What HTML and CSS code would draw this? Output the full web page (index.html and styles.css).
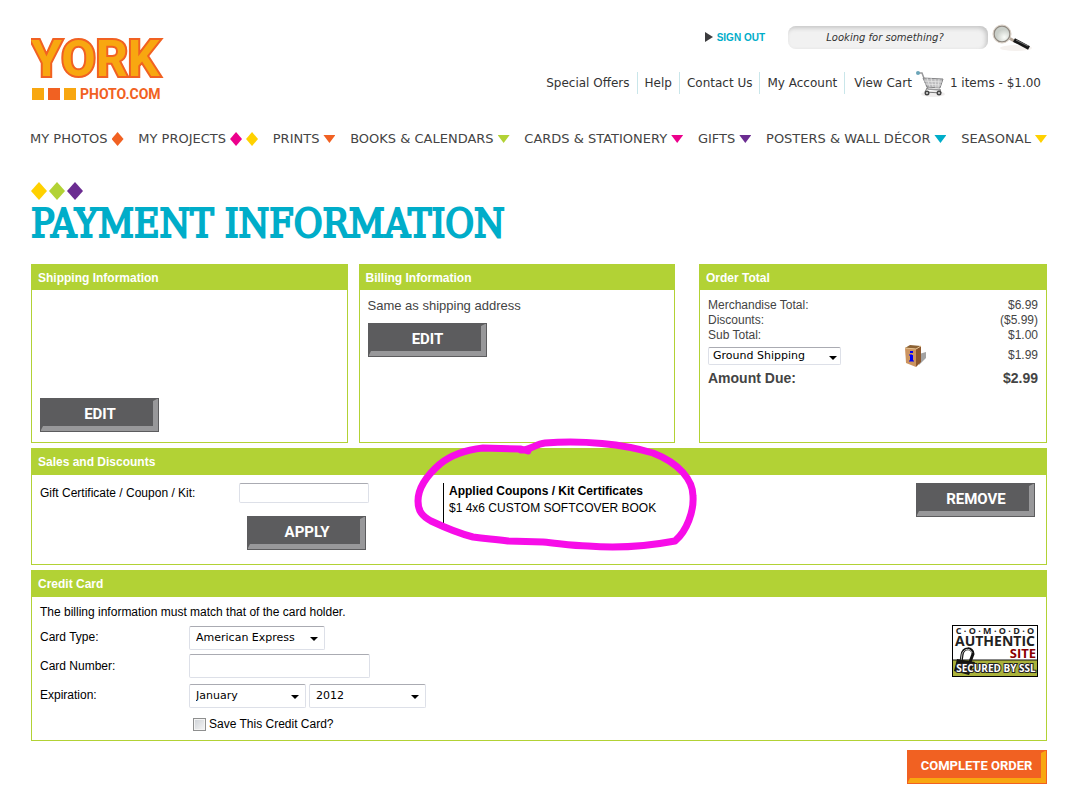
FILE: index.html
```html
<!doctype html>
<html lang="en">
  <head>
    <meta charset="UTF-8" />
    <meta name="viewport" content="width=device-width, initial-scale=1.0" />
    <title>York Photo - Payment Information</title>
    <link rel="stylesheet" href="styles.css">
  </head>
  <body>
    <div class="page">
      <!-- Header -->
      <header class="header">
        <a class="logo" href="#" aria-label="York Photo">
          <svg width="136" height="100" viewBox="0 0 136 100">
            <text class="logo-york" x="0" y="70">YORK</text>
            <rect x="1" y="82" width="12" height="12" fill="#f8a710"/>
            <rect x="17" y="82" width="12" height="12" fill="#f16122"/>
            <rect x="33" y="82" width="12" height="12" fill="#f8a710"/>
            <text class="logo-photo" x="49" y="93">PHOTO.COM</text>
          </svg>
        </a>

        <div class="header-right">
          <div class="header-top">
            <a class="sign-out" href="#">
              <svg width="8" height="10" viewBox="0 0 8 10"><path d="M0 0L8 5L0 10Z" fill="#3c3c3e"/></svg>
              SIGN OUT
            </a>
            <form class="search">
              <input class="search-input" type="text" placeholder="Looking for something?" aria-label="Search">
              <button class="search-button" type="button" aria-label="Search">
                <svg width="42" height="30" viewBox="0 0 42 30">
                  <defs>
                    <radialGradient id="lens" cx=".65" cy=".7">
                      <stop offset="0" stop-color="#fbfdf9"/>
                      <stop offset="1" stop-color="#c9cec8"/>
                    </radialGradient>
                  </defs>
                  <ellipse cx="24" cy="26" rx="16" ry="3" fill="#f5f1ee"/>
                  <path d="M17 16L24 20" stroke="#b5a79a" stroke-width="3"/>
                  <path d="M22 18L37 26" stroke="#161616" stroke-width="4"/>
                  <path d="M24 18L36 24" stroke="#777" stroke-width="1"/>
                  <circle cx="10" cy="12" r="8" fill="url(#lens)" stroke="#8f8981" stroke-width="1.5"/>
                  <circle cx="10" cy="12" r="9" fill="none" stroke="#d9cfc4" stroke-width="1"/>
                </svg>
              </button>
            </form>
          </div>
          <ul class="links">
            <li><a href="#">Special Offers</a></li>
            <li><a href="#">Help</a></li>
            <li><a href="#">Contact Us</a></li>
            <li><a href="#">My Account</a></li>
            <li class="cart">
              <a href="#">View Cart</a>
              <svg width="30" height="28" viewBox="0 0 30 28">
                <ellipse cx="17" cy="25" rx="12" ry="3" fill="#eeecec"/>
                <path d="M2 4L6 4L12 20L24 21" fill="none" stroke="#99999b" stroke-width="1.5"/>
                <circle cx="2" cy="4" r="2" fill="#6ba5b8"/>
                <path d="M7 9L27 10L24 19L11 18Z" fill="#bdbdbf" stroke="#858587"/>
                <path d="M11 9L14 18M15 9L17 18M19 10L20 19M23 10L22 19M8 12L26 13M9 15L25 16" stroke="#e9e9ea" stroke-width=".7"/>
                <path d="M11 19L9 23L25 24L24 20" fill="none" stroke="#777"/>
                <circle cx="11" cy="24" r="2.5" fill="#444"/><circle cx="11" cy="24" r="1" fill="#ddd"/>
                <circle cx="23" cy="24" r="2.5" fill="#444"/><circle cx="23" cy="24" r="1" fill="#ddd"/>
              </svg>
              <span>1 items - $1.00</span>
            </li>
          </ul>
        </div>
      </header>

      <!-- Main nav -->
      <nav class="nav">
        <a href="#">MY PHOTOS <i class="diamond orange"></i></a>
        <a href="#">MY PROJECTS <i class="diamond pink"></i><i class="diamond yellow"></i></a>
        <a href="#">PRINTS <i class="arrow orange"></i></a>
        <a href="#">BOOKS &amp; CALENDARS <i class="arrow green"></i></a>
        <a href="#">CARDS &amp; STATIONERY <i class="arrow pink"></i></a>
        <a href="#">GIFTS <i class="arrow purple"></i></a>
        <a href="#">POSTERS &amp; WALL DÉCOR <i class="arrow teal"></i></a>
        <a href="#">SEASONAL <i class="arrow yellow"></i></a>
      </nav>

      <main>
        <div class="diamonds">
          <i class="diamond yellow"></i><i class="diamond green"></i><i class="diamond purple"></i>
        </div>
        <h1>PAYMENT INFORMATION</h1>

        <div class="summary">
          <section class="card shipping">
            <h2>Shipping Information</h2>
            <div class="card-body">
              <button class="btn" type="button">EDIT</button>
            </div>
          </section>

          <section class="card billing">
            <h2>Billing Information</h2>
            <div class="card-body">
              <p>Same as shipping address</p>
              <button class="btn" type="button">EDIT</button>
            </div>
          </section>

          <section class="card order">
            <h2>Order Total</h2>
            <div class="card-body">
              <table>
                <tr><td colspan="2">Merchandise Total:</td><td class="price">$6.99</td></tr>
                <tr><td colspan="2">Discounts:</td><td class="price">($5.99)</td></tr>
                <tr><td colspan="2">Sub Total:</td><td class="price">$1.00</td></tr>
                <tr class="ship-row">
                  <td class="ship-cell">
                    <span class="select ship-select">
                      <select aria-label="Shipping method"><option>Ground Shipping</option></select>
                    </span>
                  </td>
                  <td class="box-cell">
                    <svg width="24" height="24" viewBox="0 0 24 24">
                      <path d="M15 10L22 8L22 14L15 21Z" fill="#a3a3a3"/>
                      <path d="M1 4L6 1L17 2L12 5Z" fill="#8c6234"/>
                      <path d="M1 4L12 5L12 23L2 19Z" fill="#cc9460"/>
                      <path d="M12 5L17 2L17 18L12 23Z" fill="#8d572d"/>
                      <path d="M1 4L12 5L17 2" fill="none" stroke="#e4c08e"/>
                      <path d="M6 7h3v2H6zM6 11h3v6H6z" fill="#0000f5"/>
                      <path d="M5 11h3M5 17h5" stroke="#0000f5" stroke-width="1"/>
                    </svg>
                  </td>
                  <td class="price">$1.99</td>
                </tr>
                <tr class="due"><td colspan="2">Amount Due:</td><td class="price">$2.99</td></tr>
              </table>
            </div>
          </section>
        </div>

        <section class="card sales">
          <h2>Sales and Discounts</h2>
          <div class="card-body">
            <form class="coupon-form">
              <label for="coupon">Gift Certificate / Coupon / Kit:</label>
              <input id="coupon" class="field" type="text">
              <button class="btn apply" type="button">APPLY</button>
            </form>
            <div class="applied">
              <strong>Applied Coupons / Kit Certificates</strong>
              <span>$1 4x6 CUSTOM SOFTCOVER BOOK</span>
            </div>
            <button class="btn" type="button">REMOVE</button>
          </div>
          <!-- Marker circle around the applied coupon -->
          <svg class="marker" width="290" height="120" viewBox="0 0 290 120">
            <path d="M115 14L108 12L70 11C52 13 38 18 27 27C12 40 5 52 5 64C5 74 9 79 18 84C35 92 48 97 60 100C75 102 82 102 95 104L130 105C150 107 160 109 175 109C200 111 230 110 262 104C274 94 281 74 280 59C280 43 266 26 240 16C210 7 170 3 132 6C122 7 118 13 108 13"/>
          </svg>
        </section>

        <section class="card credit">
          <h2>Credit Card</h2>
          <div class="card-body">
            <form class="card-form">
              <p>The billing information must match that of the card holder.</p>
              <label for="card-type">Card Type:</label>
              <div>
                <span class="select type-select">
                  <select id="card-type"><option>American Express</option></select>
                </span>
              </div>
              <label for="card-number">Card Number:</label>
              <input id="card-number" class="field" type="text">
              <label for="month">Expiration:</label>
              <div class="expiration">
                <span class="select"><select id="month"><option>January</option></select></span>
                <span class="select"><select aria-label="Year"><option>2012</option></select></span>
              </div>
              <label class="save"><input type="checkbox"> Save This Credit Card?</label>
            </form>

            <svg class="seal" width="86" height="52" viewBox="0 0 86 52">
              <rect x="1" y="1" width="84" height="50" fill="#fff"/>
              <rect x="1" y="35" width="84" height="16" fill="#aab23b"/>
              <path d="M0 35H86" stroke="#111" stroke-width="1"/>
              <text class="seal-comodo" x="43" y="9">C · O · M · O · D · O</text>
              <text class="seal-authentic" x="43" y="21">AUTHENTIC</text>
              <text class="seal-site" x="84" y="33">SITE</text>
              <path d="M9 37L10 30C11 22 21 22 21 29L18 37" fill="none" stroke="#111" stroke-width="3"/>
              <path d="M9 36L10 29C12 23 19 23 20 28" fill="none" stroke="#bbb" stroke-width="1"/>
              <path d="M5 34L23 37L17 50L2 46Z" fill="#16150f"/>
              <text class="seal-ssl" x="44" y="47">SECURED BY SSL</text>
              <rect x=".5" y=".5" width="85" height="51" fill="none" stroke="#000"/>
            </svg>
          </div>
        </section>

        <div class="actions">
          <button class="btn complete" type="submit">COMPLETE ORDER</button>
        </div>
      </main>
    </div>
  </body>
</html>
```
FILE: styles.css
```css
* {
  box-sizing: border-box;
}

body {
  margin: 0;
  background: #fff;
  color: #000;
  font-family: "Liberation Sans", Arial, sans-serif;
  font-size: 12px;
}

a {
  color: inherit;
  text-decoration: none;
}

.page {
  padding: 0 30px 16px 31px;
}

/* Header */
.header {
  display: flex;
  justify-content: space-between;
  padding-top: 6px;
}

.logo svg,
.seal {
  display: block;
}

.logo-york {
  font: bold 50px Roboto, sans-serif;
  fill: #f8a710;
  stroke: #f16122;
  stroke-width: 4px;
  paint-order: stroke;
}

.logo-photo {
  font: bold 14px Roboto, sans-serif;
  fill: #f16122;
}

.header-right {
  display: flex;
  flex-direction: column;
  align-items: flex-end;
  padding: 16px 6px 0 0;
}

.header-top {
  display: flex;
  align-items: center;
  padding-right: 7px;
}

.sign-out {
  display: flex;
  align-items: center;
  gap: 4px;
  margin-right: 23px;
  color: #00adc9;
  font-size: 10px;
  font-weight: bold;
}

.search {
  display: flex;
  align-items: center;
  gap: 4px;
}

.search-input {
  width: 200px;
  height: 23px;
  padding: 0 6px 0 0;
  border: 0;
  border-radius: 8px;
  background: #f1f1f1;
  box-shadow: inset -2px 2px 4px #c4c4c4;
  font: italic 10px "DejaVu Sans", Verdana, sans-serif;
  text-align: center;
}

.search-input::placeholder {
  color: #333;
}

.search-button {
  padding: 0;
  border: 0;
  background: none;
}

.search-button svg {
  display: block;
}

.links {
  display: flex;
  align-items: center;
  margin: 20px 0 0;
  padding: 0;
  list-style: none;
  color: #333;
  font: 12px/22px "DejaVu Sans", Verdana, sans-serif;
}

.links li {
  padding: 0 7px;
  border-left: 1px solid #c9e6ea;
}

.links li:first-child {
  border-left: 0;
}

.links .cart {
  display: flex;
  align-items: center;
  gap: 4px;
  height: 22px;
  padding: 0 0 0 9px;
}

/* Main nav */
.nav {
  display: flex;
  justify-content: space-between;
  margin: 24px 0 0 -1px;
  color: #444;
  font: 13px/18px "DejaVu Sans", Verdana, sans-serif;
}

.nav a {
  display: flex;
  align-items: center;
  gap: 4px;
  white-space: nowrap;
}

.diamond,
.arrow {
  display: inline-block;
  width: 12px;
}

.diamond {
  height: 14px;
  clip-path: polygon(50% 0, 100% 50%, 50% 100%, 0 50%);
}

.arrow {
  height: 8px;
  clip-path: polygon(0 0, 100% 0, 50% 100%);
}

.orange { background: #f16122; }
.pink { background: #ec008c; }
.yellow { background: #ffd100; }
.green { background: #b2d235; }
.purple { background: #6b2c91; }
.teal { background: #00adc9; }

.diamonds {
  display: flex;
  gap: 2px;
  margin-top: 34px;
}

.diamonds .diamond {
  width: 16px;
  height: 18px;
}

h1 {
  margin: 0 0 16px;
  color: #00adc9;
  font: 39px/48px "DejaVu Serif Condensed", "DejaVu Serif", serif;
  -webkit-text-stroke: 2px #00adc9;
  white-space: nowrap;
}

/* Cards */
.card {
  border: 1px solid #b2d235;
}

.card h2 {
  margin: 0;
  padding: 2px 6px 0;
  background: #b2d235;
  color: #fff;
  font-size: 12px;
  line-height: 23px;
}

.summary {
  display: grid;
  grid-template-columns: 1fr 1fr 361px;
  column-gap: 11px;
  min-height: 179px;
}

.summary .card {
  display: flex;
  flex-direction: column;
}

.summary .card-body {
  flex: 1;
  padding: 8px;
  color: #444;
  line-height: 15px;
}

.summary .shipping .card-body {
  display: flex;
  align-items: flex-end;
  padding-bottom: 10px;
}

.billing p {
  margin: 0 0 10px;
  font-size: 13px;
}

.order {
  margin-left: 13px;
}

.order table {
  width: 100%;
  border-collapse: collapse;
}

.order td {
  padding: 0;
}

.price {
  text-align: right;
}

.ship-row td {
  height: 25px;
  vertical-align: middle;
}

.ship-cell {
  width: 196px;
}

.box-cell svg {
  display: block;
}

.ship-select {
  width: 133px;
  height: 18px;
}

.due td {
  font-size: 14px;
  font-weight: bold;
  line-height: 20px;
}

/* Buttons */
.btn {
  width: 119px;
  height: 34px;
  padding: 0 0 0 4px;
  border: solid;
  border-width: 3px 6px 6px 3px;
  border-color: #5c5c5e #98989a #98989a #5c5c5e;
  outline: 1px solid #5c5c5e;
  outline-offset: -1px;
  background: #5c5c5e;
  color: #fff;
  font: bold 15px/24px Roboto, sans-serif;
}

.complete {
  width: 140px;
  padding-left: 2px;
  border-color: #f16122 #f8a710 #f8a710 #f16122;
  outline-color: #f16122;
  background: #f16122;
  font-size: 13px;
  white-space: nowrap;
}

/* Form fields */
.field,
.select select {
  border: 1px solid #dde0e8;
  border-top-color: #aaabb2;
  border-radius: 2px;
  background: #fff;
}

.select {
  position: relative;
  display: inline-block;
  vertical-align: middle;
}

.select select {
  width: 100%;
  height: 100%;
  padding: 0 4px;
  appearance: none;
  color: #000;
  font: 11px "DejaVu Sans", Verdana, sans-serif;
}

.select::after {
  content: "";
  position: absolute;
  right: 4px;
  top: 50%;
  border: 4px solid transparent;
  border-top-color: #000;
  border-bottom: 0;
  pointer-events: none;
}

/* Sales and discounts */
.sales,
.credit {
  position: relative;
  margin-top: 5px;
}

.sales h2,
.credit h2 {
  padding-top: 0;
  line-height: 26px;
}

.sales .card-body {
  display: grid;
  grid-template-columns: 403px 1fr auto;
  align-items: start;
  min-height: 89px;
  padding: 8px 11px 0 8px;
}

.coupon-form {
  display: grid;
  grid-template-columns: 199px 130px;
  row-gap: 13px;
  line-height: 20px;
}

.coupon-form .field {
  height: 20px;
}

.apply {
  grid-column: 2;
  margin-left: 8px;
}

.applied {
  display: flex;
  flex-direction: column;
  height: 40px;
  padding-left: 5px;
  border-left: 1px solid #000;
  line-height: 17px;
}

.marker {
  position: absolute;
  left: 381px;
  top: -12px;
  pointer-events: none;
}

.marker path {
  fill: none;
  stroke: #f70de8;
  stroke-width: 7px;
  stroke-linejoin: round;
  stroke-linecap: round;
}

/* Credit card */
.credit .card-body {
  display: flex;
  justify-content: space-between;
  padding: 8px 8px 4px;
}

.card-form {
  display: grid;
  grid-template-columns: 149px 240px;
  row-gap: 5px;
  line-height: 24px;
}

.card-form p {
  grid-column: 1 / 3;
  margin: 0;
  line-height: 15px;
}

.card-form .select {
  height: 24px;
  vertical-align: top;
}

.card-form .select select {
  padding-left: 6px;
}

.card-form .select::after {
  right: 7px;
}

.type-select {
  width: 136px;
}

.card-form .field {
  width: 181px;
  height: 24px;
}

.expiration {
  display: flex;
  gap: 3px;
}

.expiration .select {
  width: 117px;
}

.save {
  display: flex;
  grid-column: 2;
  align-items: center;
  gap: 3px;
  padding-left: 4px;
}

.save input {
  width: 13px;
  height: 13px;
  margin: 0;
  appearance: none;
  border: 1px solid #8e8f8f;
  background: linear-gradient(135deg, #cdd1d6, #f6f6f6);
  box-shadow: inset 0 0 0 1px #f4f4f4;
}

.seal {
  margin-top: 20px;
}

.seal text {
  font-family: "Open Sans", sans-serif;
  font-weight: bold;
  text-anchor: middle;
  fill: #222;
}

.seal .seal-comodo {
  font-size: 9px;
}

.seal .seal-authentic {
  font-size: 14px;
}

.seal .seal-site {
  font-size: 13px;
  text-anchor: end;
  fill: #8b0000;
}

.seal .seal-ssl {
  font-size: 10px;
  fill: #fff;
  stroke: #222;
  stroke-width: 2px;
  paint-order: stroke;
}

.actions {
  display: flex;
  justify-content: flex-end;
  margin-top: 9px;
}
```
